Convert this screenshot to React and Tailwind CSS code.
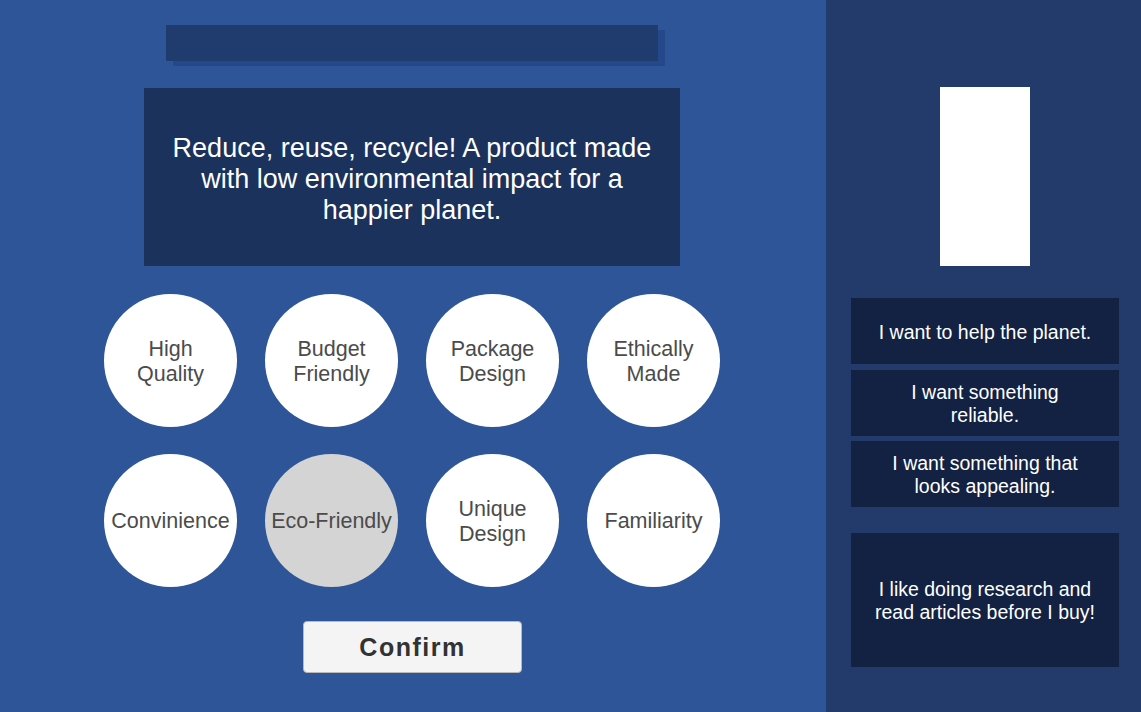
import React from "react";

const options = [
  { label: "High Quality", lines: ["High", "Quality"] },
  { label: "Budget Friendly", lines: ["Budget", "Friendly"] },
  { label: "Package Design", lines: ["Package", "Design"] },
  { label: "Ethically Made", lines: ["Ethically", "Made"] },
  { label: "Convinience", lines: ["Convinience"] },
  { label: "Eco-Friendly", lines: ["Eco-Friendly"], selected: true },
  { label: "Unique Design", lines: ["Unique", "Design"] },
  { label: "Familiarity", lines: ["Familiarity"] },
];

const answers = [
  { text: "I want to help the planet.", mt: "mt-0" },
  { text: "I want something reliable.", mt: "mt-[6px]", w: "w-[180px]" },
  { text: "I want something that looks appealing.", mt: "mt-[5px]", w: "w-[215px]" },
];

const App = () => {
  return (
    <div
      className="flex w-[1141px] h-[712px] overflow-hidden"
      style={{ fontFamily: '"Liberation Sans", Arial, sans-serif' }}
    >
      {/* left side */}
      <div className="w-[826px] h-full bg-[#2e5597] flex flex-col">
        <div className="ml-[166px] mt-[25px] w-[492px] h-[36px] bg-[#203b6e] shadow-[7px_5px_0_#24488a]"></div>

        <div className="ml-[144px] mt-[27px] w-[536px] h-[178px] bg-[#1b325d] flex items-center justify-center pt-[4px]">
          <p className="text-white text-[27px] leading-[31px] text-center">
            Reduce, reuse, recycle! A product made
            <br />
            with low environmental impact for a
            <br />
            happier planet.
          </p>
        </div>

        <div className="ml-[104px] mt-[28px] grid grid-cols-[repeat(4,133px)] gap-x-[28px] gap-y-[27px]">
          {options.map((o) => (
            <div
              key={o.label}
              className={`w-[133px] h-[133px] rounded-full flex flex-col items-center justify-center pt-[2px] text-[21.5px] leading-[25px] text-[#4b4b4b] text-center ${
                o.selected ? "bg-[#d4d4d4]" : "bg-white"
              }`}
            >
              {o.lines.map((l) => (
                <span key={l}>{l}</span>
              ))}
            </div>
          ))}
        </div>

        <button className="ml-[303px] mt-[34px] w-[219px] h-[52px] bg-[#f4f4f4] border border-[#b9b9b9] rounded-[4px] text-[25px] font-bold tracking-[1.5px] text-[#323232] pt-[2px]">
          Confirm
        </button>
      </div>

      {/* right side */}
      <div className="flex-1 h-full bg-[#223b6b] flex flex-col">
        <div className="ml-[114px] mt-[87px] w-[90px] h-[179px] bg-white"></div>

        <div className="ml-[25px] mt-[32px] w-[268px] flex flex-col">
          {answers.map((a) => (
            <div
              key={a.text}
              className={`${a.mt} h-[66px] bg-[#132242] flex items-center justify-center pt-[2px]`}
            >
              <p className={`${a.w || ""} text-white text-[19.5px] leading-[23px] text-center`}>
                {a.text}
              </p>
            </div>
          ))}
        </div>

        <div className="ml-[25px] mt-[26px] w-[268px] h-[134px] bg-[#132242] flex items-center justify-center pt-[2px]">
          <p className="text-white text-[19.5px] leading-[23px] text-center">
            I like doing research and
            <br />
            read articles before I buy!
          </p>
        </div>
      </div>
    </div>
  );
};

export default App;
